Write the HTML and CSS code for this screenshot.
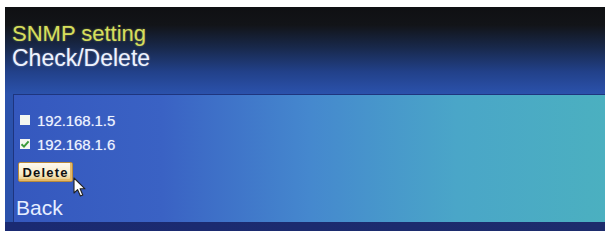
FILE: index.html
```html
<!DOCTYPE html>
<html lang="en">
<head>
<meta charset="utf-8">
<title>SNMP setting</title>
<link rel="stylesheet" href="styles.css">
</head>
<body>
<div class="screen">
  <div class="head">
    <div class="title">SNMP setting</div>
    <div class="subtitle">Check/Delete</div>
  </div>
  <div class="panel">
    <label class="row">
      <span class="box"></span>
      <span class="addr">192.168.1.5</span>
    </label>
    <label class="row">
      <span class="box">
        <svg width="10" height="10" viewBox="0 0 10 10"><path d="M1.5 5.2 L4 7.6 L8.6 2.4" fill="none" stroke="#3a9a3a" stroke-width="2"/></svg>
      </span>
      <span class="addr">192.168.1.6</span>
    </label>
    <div class="btnwrap">
      <button class="btn">Delete</button>
      <svg class="cursor" width="14" height="21" viewBox="0 0 14 21">
        <path d="M1 1 L1 16 L4.6 12.6 L7.4 19 L9.8 18 L7.1 11.8 L12 11.8 Z" fill="#fff" stroke="#222" stroke-width="1.1" stroke-linejoin="round"/>
      </svg>
    </div>
    <div class="back">Back</div>
  </div>
  <div class="foot"></div>
</div>
</body>
</html>
```

FILE: styles.css
```css
body{
margin:0;
background:#fff;
padding:7px 0 0 5px;
font-family:"Liberation Sans", Arial, sans-serif;
}
.screen{
width:600px;
height:224px;
display:flex;
flex-direction:column;
background:linear-gradient(to bottom,#0f1013 0px,#121418 18px,#18284a 40px,#22418a 65px,#2b52ac 87px);
}
.head{
height:87px;
padding:14px 0 0 7px;
box-sizing:border-box;
font-size:22px;
line-height:25px;
}
.title{
color:#d6de5c;
text-shadow:0 0 2px rgba(214,222,92,0.5);
}
.subtitle{
color:#eef3ff;
font-size:23px;
text-shadow:0 0 2px rgba(255,255,255,0.4);
}
.panel{
flex:1;
margin-left:8px;
padding:13px 0 0 4px;
border-top:1px solid #1e357e;
border-left:1px solid #1e357e;
background:linear-gradient(to right,#3558be 0%,#3a62c4 25%,#4588ce 50%,#4aa6c8 75%,#4bb0c0 100%);
color:#eef3ff;
}
.row{
display:flex;
align-items:center;
height:24px;
padding-left:2px;
font-size:15px;
}
.box{
width:10px;
height:10px;
background:#f4f6f0;
display:inline-block;
margin-right:7px;
}
.box svg{display:block;}
.addr{
text-shadow:0 0 1px rgba(255,255,255,0.5);
letter-spacing:-0.1px;
}
.btnwrap{
position:relative;
margin-top:6px;
height:20px;
}
.btn{
width:55px;
height:20px;
padding:0;
border:1px solid #b88a3c;
border-radius:2px;
background:linear-gradient(to bottom,#fffaf0 0%,#f8ecc8 60%,#e8c880 100%);
box-shadow:inset -2px -2px 0 #e3b868;
font-family:"Liberation Sans", Arial, sans-serif;
font-size:13px;
letter-spacing:1.2px;
color:#111;
font-weight:bold;
}
.cursor{
position:absolute;
left:55px;
top:15px;
}
.back{
margin-top:14px;
margin-left:-2px;
font-size:21px;
line-height:24px;
color:#e6eeff;
}
.foot{
height:9px;
background:linear-gradient(to right,#1a2a72,#1d2c6c);
}
```
